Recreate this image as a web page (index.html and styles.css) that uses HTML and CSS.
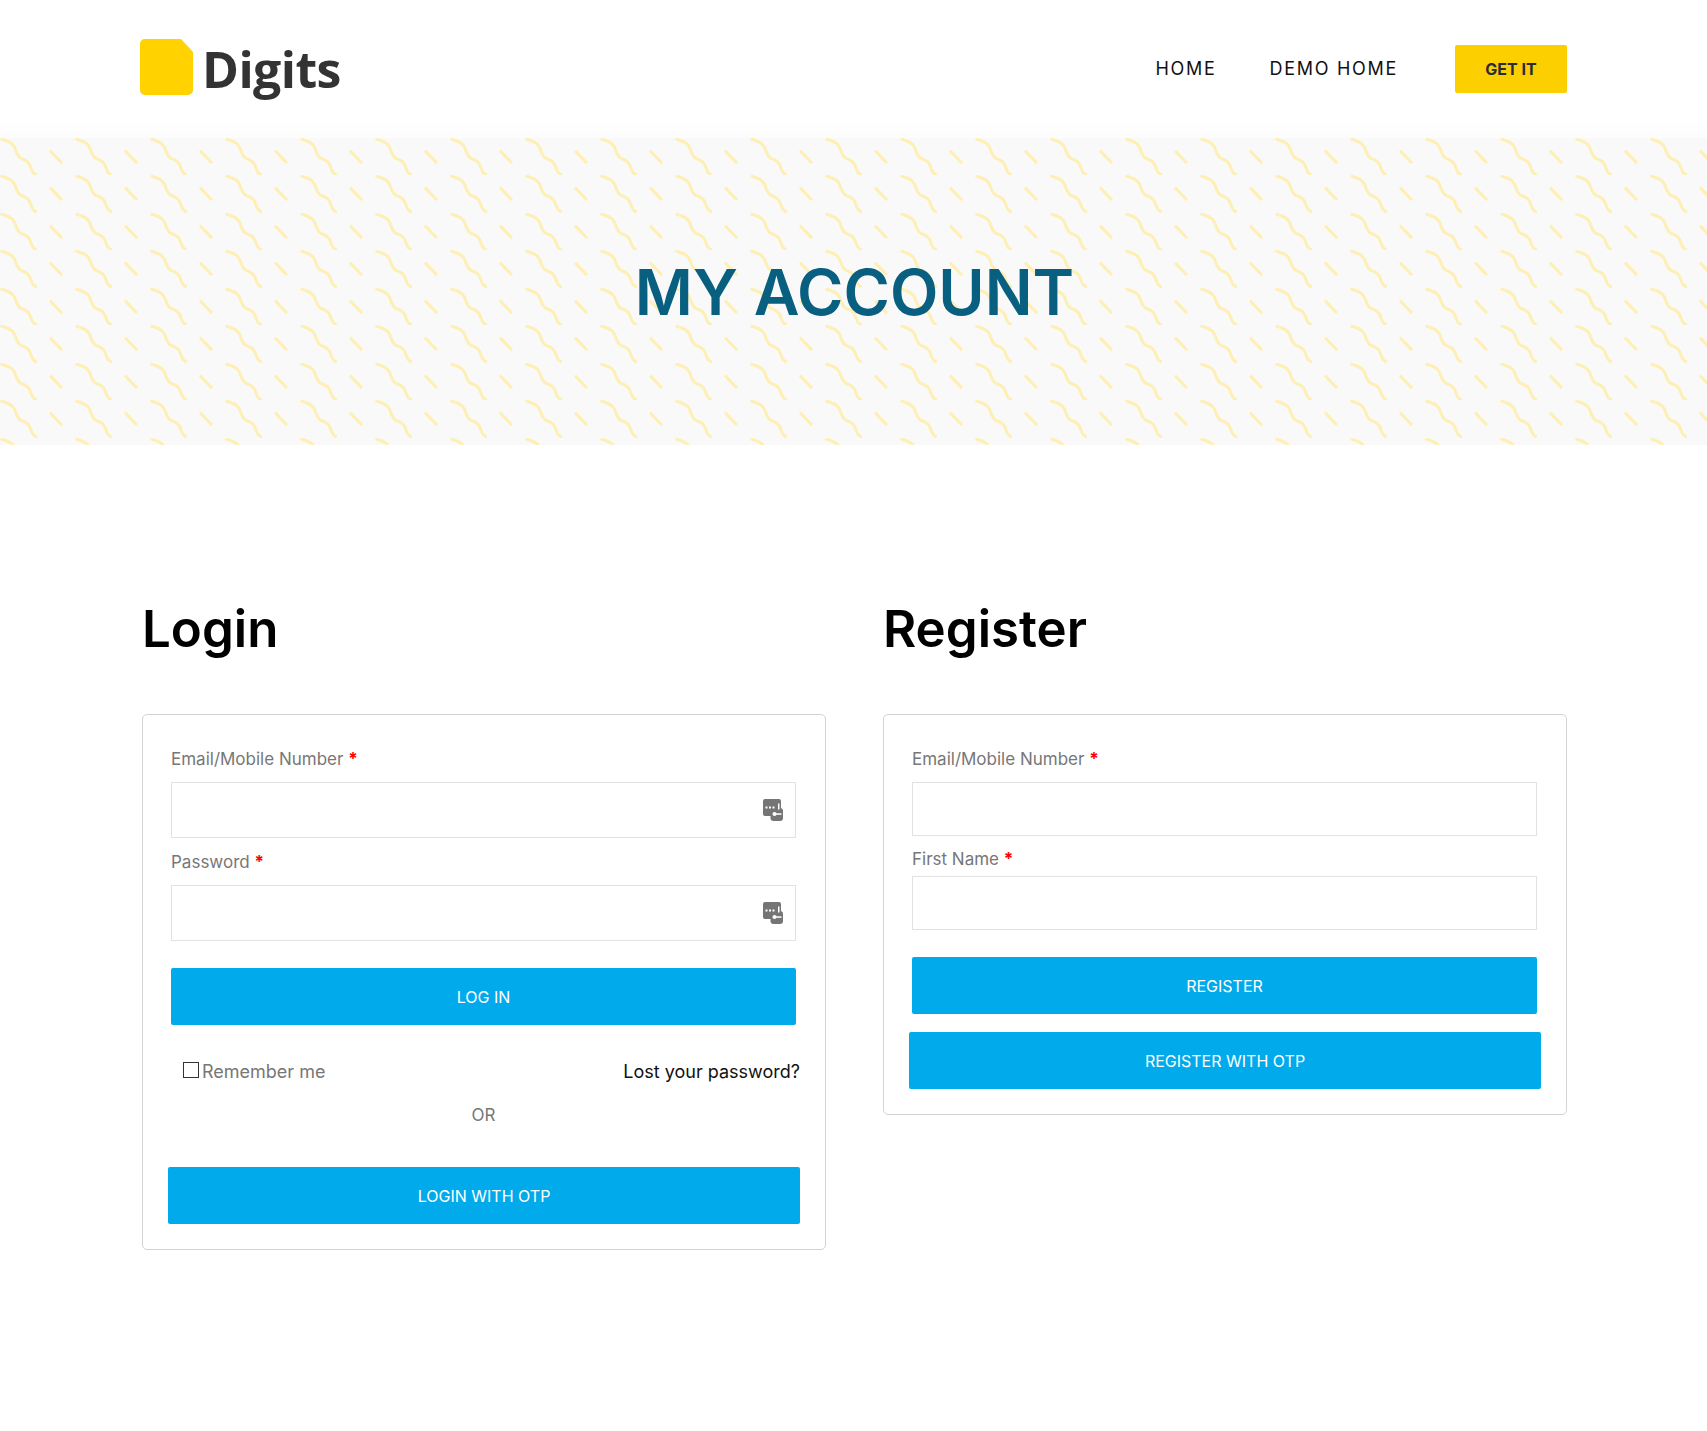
FILE: index.html
```html
<!DOCTYPE html>
<html lang="en">
<head>
<meta charset="utf-8">
<title>My Account – Digits</title>
<link rel="stylesheet" href="styles.css">
</head>
<body>
<header class="site-header">
  <a class="brand" href="#">
    <svg class="brand-mark" width="53" height="56" viewBox="0 0 53 56"><path d="M5 0H41L53 13V51a5 5 0 0 1-5 5H5a5 5 0 0 1-5-5V5a5 5 0 0 1 5-5Z" fill="#ffd200"/></svg>
    <span class="brand-name">Digits</span>
  </a>
  <nav class="site-nav">
    <a class="nav-link" href="#">HOME</a>
    <a class="nav-link" href="#">DEMO HOME</a>
    <a class="nav-cta" href="#">GET IT</a>
  </nav>
</header>

<section class="hero">
  <h1 class="hero-title">MY ACCOUNT</h1>
</section>

<main class="account">
  <section class="col">
    <h2 class="col-title">Login</h2>
    <form class="card card-login">
      <label class="field-label">Email/Mobile Number <span class="req">*</span></label>
      <div class="field">
        <input class="input" type="text">
        <svg class="pm-icon" width="20" height="22" viewBox="0 0 20 22"><rect width="18" height="17" rx="2" fill="#757575"/><rect x="7.500" y="9" width="12.500" height="13" rx="3" fill="#757575"/><g fill="#fff"><rect x="2.500" y="7.500" width="2" height="2"/><rect x="6" y="7.500" width="2" height="2"/><rect x="9.500" y="7.500" width="2" height="2"/><rect x="15" y="4.500" width="1.500" height="6"/><circle cx="11.500" cy="15" r="2"/><rect x="12" y="14.300" width="6.500" height="1.500"/></g></svg>
      </div>
      <label class="field-label field-label-next">Password <span class="req">*</span></label>
      <div class="field">
        <input class="input" type="password">
        <svg class="pm-icon" width="20" height="22" viewBox="0 0 20 22"><rect width="18" height="17" rx="2" fill="#757575"/><rect x="7.500" y="9" width="12.500" height="13" rx="3" fill="#757575"/><g fill="#fff"><rect x="2.500" y="7.500" width="2" height="2"/><rect x="6" y="7.500" width="2" height="2"/><rect x="9.500" y="7.500" width="2" height="2"/><rect x="15" y="4.500" width="1.500" height="6"/><circle cx="11.500" cy="15" r="2"/><rect x="12" y="14.300" width="6.500" height="1.500"/></g></svg>
      </div>
      <button class="btn btn-primary" type="button">LOG IN</button>
      <div class="login-meta">
        <label class="remember"><span class="check"></span>Remember me</label>
        <a class="lost" href="#">Lost your password?</a>
      </div>
      <p class="or">OR</p>
      <button class="btn btn-wide" type="button">LOGIN WITH OTP</button>
    </form>
  </section>

  <section class="col">
    <h2 class="col-title">Register</h2>
    <form class="card card-register">
      <label class="field-label">Email/Mobile Number <span class="req">*</span></label>
      <input class="input input-short" type="text">
      <label class="field-label field-label-reg">First Name <span class="req">*</span></label>
      <input class="input input-short" type="text">
      <button class="btn btn-primary" type="button">REGISTER</button>
      <button class="btn btn-wide btn-reg-otp" type="button">REGISTER WITH OTP</button>
    </form>
  </section>
</main>
</body>
</html>
```

FILE: styles.css
```css
* { box-sizing: border-box; }

html, body { margin: 0; padding: 0; }

body {
  min-height: 1431px;
  background: #fff;
  font-family: "Inter", "Liberation Sans", sans-serif;
  color: #777;
}

a { text-decoration: none; }

.site-header {
  height: 138px;
  padding: 39px 140px 0;
  display: flex;
  justify-content: space-between;
  align-items: flex-start;
  background: linear-gradient(to bottom, #fff 120px, #fcfcfc 138px);
}

.brand {
  display: flex;
  align-items: flex-start;
  gap: 9px;
}

.brand-mark { display: block; }

.brand-name {
  font-family: "Open Sans", sans-serif;
  font-weight: 700;
  font-size: 50px;
  line-height: 56px;
  letter-spacing: -0.6px;
  color: #333;
  margin-top: 2px;
}

.site-nav {
  display: flex;
  align-items: center;
  margin-top: 6px;
}

.nav-link {
  font-size: 18px;
  line-height: 48px;
  color: #111;
  letter-spacing: 1.7px;
  margin-right: 53px;
}

.nav-cta {
  width: 112px;
  height: 48px;
  line-height: 48px;
  text-align: center;
  background: #fccf00;
  border-radius: 2px;
  font-size: 16px;
  font-weight: 700;
  color: #2b2b38;
  margin-left: 4px;
}

.hero {
  height: 306.500px;
  background-color: #f9f9f9;
  background-image: url("data:image/svg+xml,%3Csvg xmlns='http://www.w3.org/2000/svg' width='75' height='37.5' viewBox='0 0 75 37.5'%3E%3Cg fill='none' stroke='%23feefb4' stroke-width='3'%3E%3Cpath d='M0.500 0.800C6 2.500 12 3.500 14.500 9C16.500 14 17 18 21 20C25 22 28 22 30 27C32 32 32.500 35.500 37 36.500'/%3E%3Cpath d='M50 12.500L62 24.800'/%3E%3C/g%3E%3C/svg%3E");
  background-size: 75px 37.5px;
  display: flex;
  justify-content: center;
}

.hero-title {
  margin: 126px 0 0 2px;
  font-size: 63px;
  line-height: 56px;
  font-weight: 600;
  color: #085f80;
}

.account {
  display: grid;
  grid-template-columns: 684px 684px;
  column-gap: 57px;
  padding: 154px 0 0 142px;
  align-items: start;
}

.col-title {
  margin: 0 0 55px;
  font-size: 51px;
  line-height: 60px;
  font-weight: 600;
  color: #000;
}

.card {
  display: flex;
  flex-direction: column;
  align-items: stretch;
  padding: 32px 29px 0 28px;
  border: 1px solid #d3d3d3;
  border-radius: 5px;
}

.card-login { height: 536px; }
.card-register { height: 401px; }

.field-label {
  font-size: 17px;
  line-height: 24px;
  color: #777;
  margin-bottom: 11px;
}

.field-label-next { margin-top: 12px; margin-bottom: 11px; }
.field-label-reg { margin-top: 11px; margin-bottom: 5px; }

.req { color: #f00; font-weight: 700; }

.field { position: relative; }

.input {
  display: block;
  width: 100%;
  height: 56px;
  border: 1px solid #e2e2e2;
  background: #fff;
  outline: 0;
}

.input-short { height: 54px; }

.pm-icon {
  position: absolute;
  right: 13px;
  top: 17px;
}

.btn {
  display: block;
  height: 57px;
  padding-top: 2px;
  border: 0;
  border-radius: 2px;
  background: #00aaeb;
  color: #fff;
  font-family: inherit;
  font-size: 16px;
  font-weight: 400;
}

.btn-primary { margin-top: 27px; }

.btn-wide {
  width: 632px;
  margin-left: -3px;
}

.btn-reg-otp { margin-top: 18px; }

.login-meta {
  display: flex;
  justify-content: space-between;
  align-items: center;
  height: 32px;
  margin: 31px -4px 0 12px;
  font-size: 18px;
}

.remember {
  display: flex;
  align-items: center;
  gap: 3px;
  color: #777;
}

.check {
  width: 16px;
  height: 16px;
  border: 1px solid #333;
  margin-top: -3px;
}

.lost { color: #111; }

.or {
  margin: 15px 0 0;
  height: 24px;
  line-height: 24px;
  text-align: center;
  font-size: 17px;
  color: #777;
}

.card-login .btn-wide { margin-top: 40px; }
```
